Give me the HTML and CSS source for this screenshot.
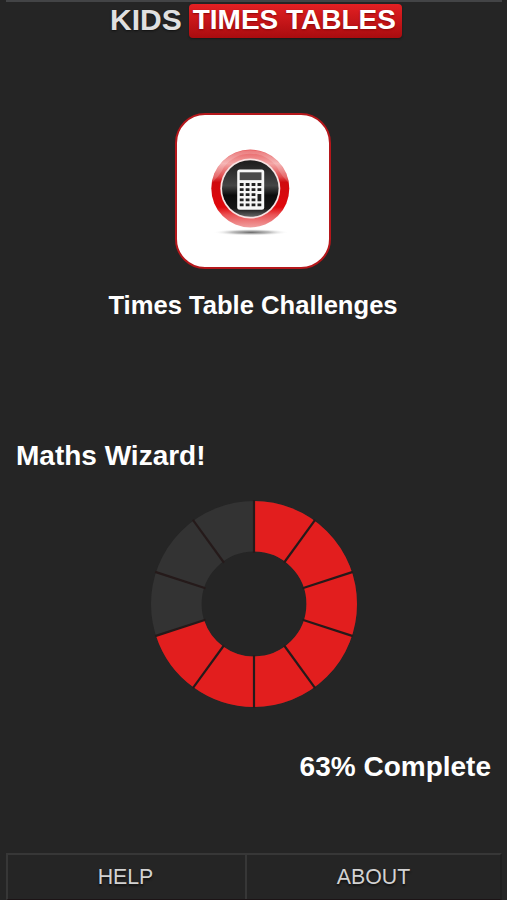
FILE: index.html
```html
<!DOCTYPE html>
<html lang="en">
<head>
  <meta charset="UTF-8">
  <title>Kids Times Tables</title>
  <meta name="viewport" content="width=device-width, initial-scale=1.0">
  <link rel="stylesheet" href="styles.css">
</head>
<body>

  <!-- Header -->
  <header class="header">
    <span class="logo-kids">KIDS</span>
    <span class="logo-tables">TIMES TABLES</span>
  </header>

  <main class="content">
    <!-- Challenge tile -->
    <a class="challenge" href="#">
      <span class="tile">
        <svg class="tile-icon" width="90" height="96" viewBox="0 0 90 96">
          <defs>
            <linearGradient id="ring" x1="0" y1="0" x2="0" y2="1">
              <stop offset="0" stop-color="#e65a5c"/>
              <stop offset="0.18" stop-color="#f3a5a5"/>
              <stop offset="0.35" stop-color="#e04a4c"/>
              <stop offset="0.42" stop-color="#cf0a0e"/>
              <stop offset="0.74" stop-color="#e0080c"/>
              <stop offset="0.84" stop-color="#ea5557"/>
              <stop offset="1" stop-color="#f0a0a0"/>
            </linearGradient>
            <linearGradient id="disc" x1="0" y1="0" x2="0" y2="1">
              <stop offset="0" stop-color="#1c1c1c"/>
              <stop offset="0.45" stop-color="#454545"/>
              <stop offset="0.62" stop-color="#0c0c0c"/>
              <stop offset="0.85" stop-color="#151515"/>
              <stop offset="1" stop-color="#686868"/>
            </linearGradient>
            <radialGradient id="shadow">
              <stop offset="0" stop-color="#555555" stop-opacity="0.9"/>
              <stop offset="0.5" stop-color="#888888" stop-opacity="0.55"/>
              <stop offset="1" stop-color="#ffffff" stop-opacity="0"/>
            </radialGradient>
          </defs>
          <ellipse cx="46" cy="87.3" rx="38" ry="3.4" fill="url(#shadow)"/>
          <circle cx="45.3" cy="43.5" r="39" fill="url(#ring)"/>
          <path d="M6.8 38 C13 32 16 28 19 22 A33 33 0 0 1 72 22 C75 28 78 32 83.8 38 A39 39 0 0 0 6.8 38z" fill="#ffffff" opacity="0.18"/>
          <circle cx="45.3" cy="43.5" r="30" fill="#f8e4e4"/>
          <circle cx="45.3" cy="43.5" r="28.3" fill="url(#disc)"/>
          <rect x="32.2" y="24.4" width="27" height="40.4" rx="2.5" fill="#f7f7f7"/>
          <rect x="34.7" y="27.3" width="21.8" height="7.8" fill="#4a4a4a"/>
          <g fill="#222222">
            <path d="M34.8 38.1h3.8v2.8h-3.8z M40.7 38.1h3.8v2.8h-3.8z M46.6 38.1h3.8v2.8h-3.8z M52.5 38.1h3.8v2.8h-3.8z"/>
            <path d="M34.8 43.2h3.8v2.8h-3.8z M40.7 43.2h3.8v2.8h-3.8z M46.6 43.2h3.8v2.8h-3.8z M52.5 43.2h3.8v2.8h-3.8z"/>
            <path d="M34.8 48.3h3.8v2.8h-3.8z M40.7 48.3h3.8v2.8h-3.8z M46.6 48.3h3.8v2.8h-3.8z"/>
            <path d="M34.8 53.4h3.8v2.8h-3.8z M40.7 53.4h3.8v2.8h-3.8z M46.6 53.4h3.8v2.8h-3.8z M52.5 49h3.8v7.2h-3.8z"/>
            <path d="M34.8 58.5h3.8v2.8h-3.8z M40.7 58.5h3.8v2.8h-3.8z M46.6 58.5h3.8v2.8h-3.8z M52.5 58.5h3.8v2.8h-3.8z"/>
          </g>
        </svg>
      </span>
      <span class="challenge-title">Times Table Challenges</span>
    </a>

    <!-- Progress -->
    <section class="progress">
      <h2 class="level">Maths Wizard!</h2>
      <svg class="wheel" width="208" height="208" viewBox="-104 -104 208 208">
        <circle class="wheel-track" r="77.7"/>
        <circle class="wheel-value" r="77.7" pathLength="10" transform="rotate(-90)"/>
        <g class="wheel-lines">
          <path d="M0-51V-104"/>
          <path d="M0-51V-104" transform="rotate(36)"/>
          <path d="M0-51V-104" transform="rotate(72)"/>
          <path d="M0-51V-104" transform="rotate(108)"/>
          <path d="M0-51V-104" transform="rotate(144)"/>
          <path d="M0-51V-104" transform="rotate(180)"/>
          <path d="M0-51V-104" transform="rotate(216)"/>
          <path d="M0-51V-104" transform="rotate(252)"/>
          <path d="M0-51V-104" transform="rotate(288)"/>
          <path d="M0-51V-104" transform="rotate(324)"/>
        </g>
      </svg>
      <p class="complete">63% Complete</p>
    </section>
  </main>

  <!-- Bottom bar -->
  <nav class="tabs">
    <a class="tab-help" href="#">HELP</a>
    <a class="tab-about" href="#">ABOUT</a>
  </nav>

</body>
</html>
```

FILE: styles.css
```css
* {
  margin: 0;
  padding: 0;
  box-sizing: border-box;
}

body {
  font-family: "Liberation Sans", Arial, sans-serif;
  background: #252525;
  color: #fff;
  display: flex;
  flex-direction: column;
  height: 900px;
  padding: 0 5px 0 6px;
  overflow: hidden;
}

.header {
  display: flex;
  justify-content: center;
  align-items: flex-start;
  gap: 7px;
  height: 41px;
  padding: 2px 0 0 4px;
  border-top: 2px solid #434446;
  font-weight: bold;
  white-space: nowrap;
}

.logo-kids {
  font-size: 30px;
  line-height: 32px;
  color: #e0e0e0;
  text-shadow: 0 1px 2px #111;
}

.logo-tables {
  height: 34px;
  padding: 0 6px 0 4px;
  border-radius: 4px;
  background: linear-gradient(#e32023, #a90c0f);
  font-size: 28px;
  line-height: 32px;
  text-shadow: 0 1px 2px #8a0808;
  box-shadow: 0 1px 2px #181818;
}

.content {
  flex: 1;
}

.challenge {
  display: flex;
  flex-direction: column;
  align-items: center;
  padding: 72px 2px 0 0;
  color: #fff;
  text-decoration: none;
}

.tile {
  display: flex;
  width: 156px;
  height: 156px;
  padding: 30px 0 0 28px;
  border: 2px solid #b5171b;
  border-radius: 30px;
  background: #fff;
}

.challenge-title {
  margin-top: 20px;
  font-size: 25.6px;
  font-weight: bold;
  line-height: 32px;
}

.progress {
  display: flex;
  flex-direction: column;
  padding: 118px 11px 0 10px;
}

.level,
.complete {
  font-size: 28px;
  font-weight: bold;
  line-height: 34px;
}

.wheel {
  align-self: center;
  margin-top: 27px;
}

.wheel circle {
  fill: none;
  stroke-width: 50.6;
}

.wheel .wheel-track {
  stroke: #333;
}

.wheel .wheel-value {
  stroke: #e21e1e;
  stroke-dasharray: 7 10;
}

.wheel-lines {
  stroke: #251a1a;
  stroke-width: 2.2;
}

.complete {
  align-self: flex-end;
  margin-top: 42px;
}

.tabs {
  display: flex;
  height: 47px;
  border-top: 2px solid #373737;
  border-left: 2px solid #373737;
  border-right: 2px solid #1f1f1f;
  border-bottom: 1px solid #1c1416;
}

.tabs a {
  color: #d2d2d2;
  font-size: 21.3px;
  line-height: 45px;
  text-align: center;
  text-decoration: none;
  text-shadow: 0 2px 2px #111;
}

.tab-help {
  width: 237px;
  padding-right: 2px;
}

.tab-about {
  flex: 1;
  border-left: 2px solid #373737;
}
```
